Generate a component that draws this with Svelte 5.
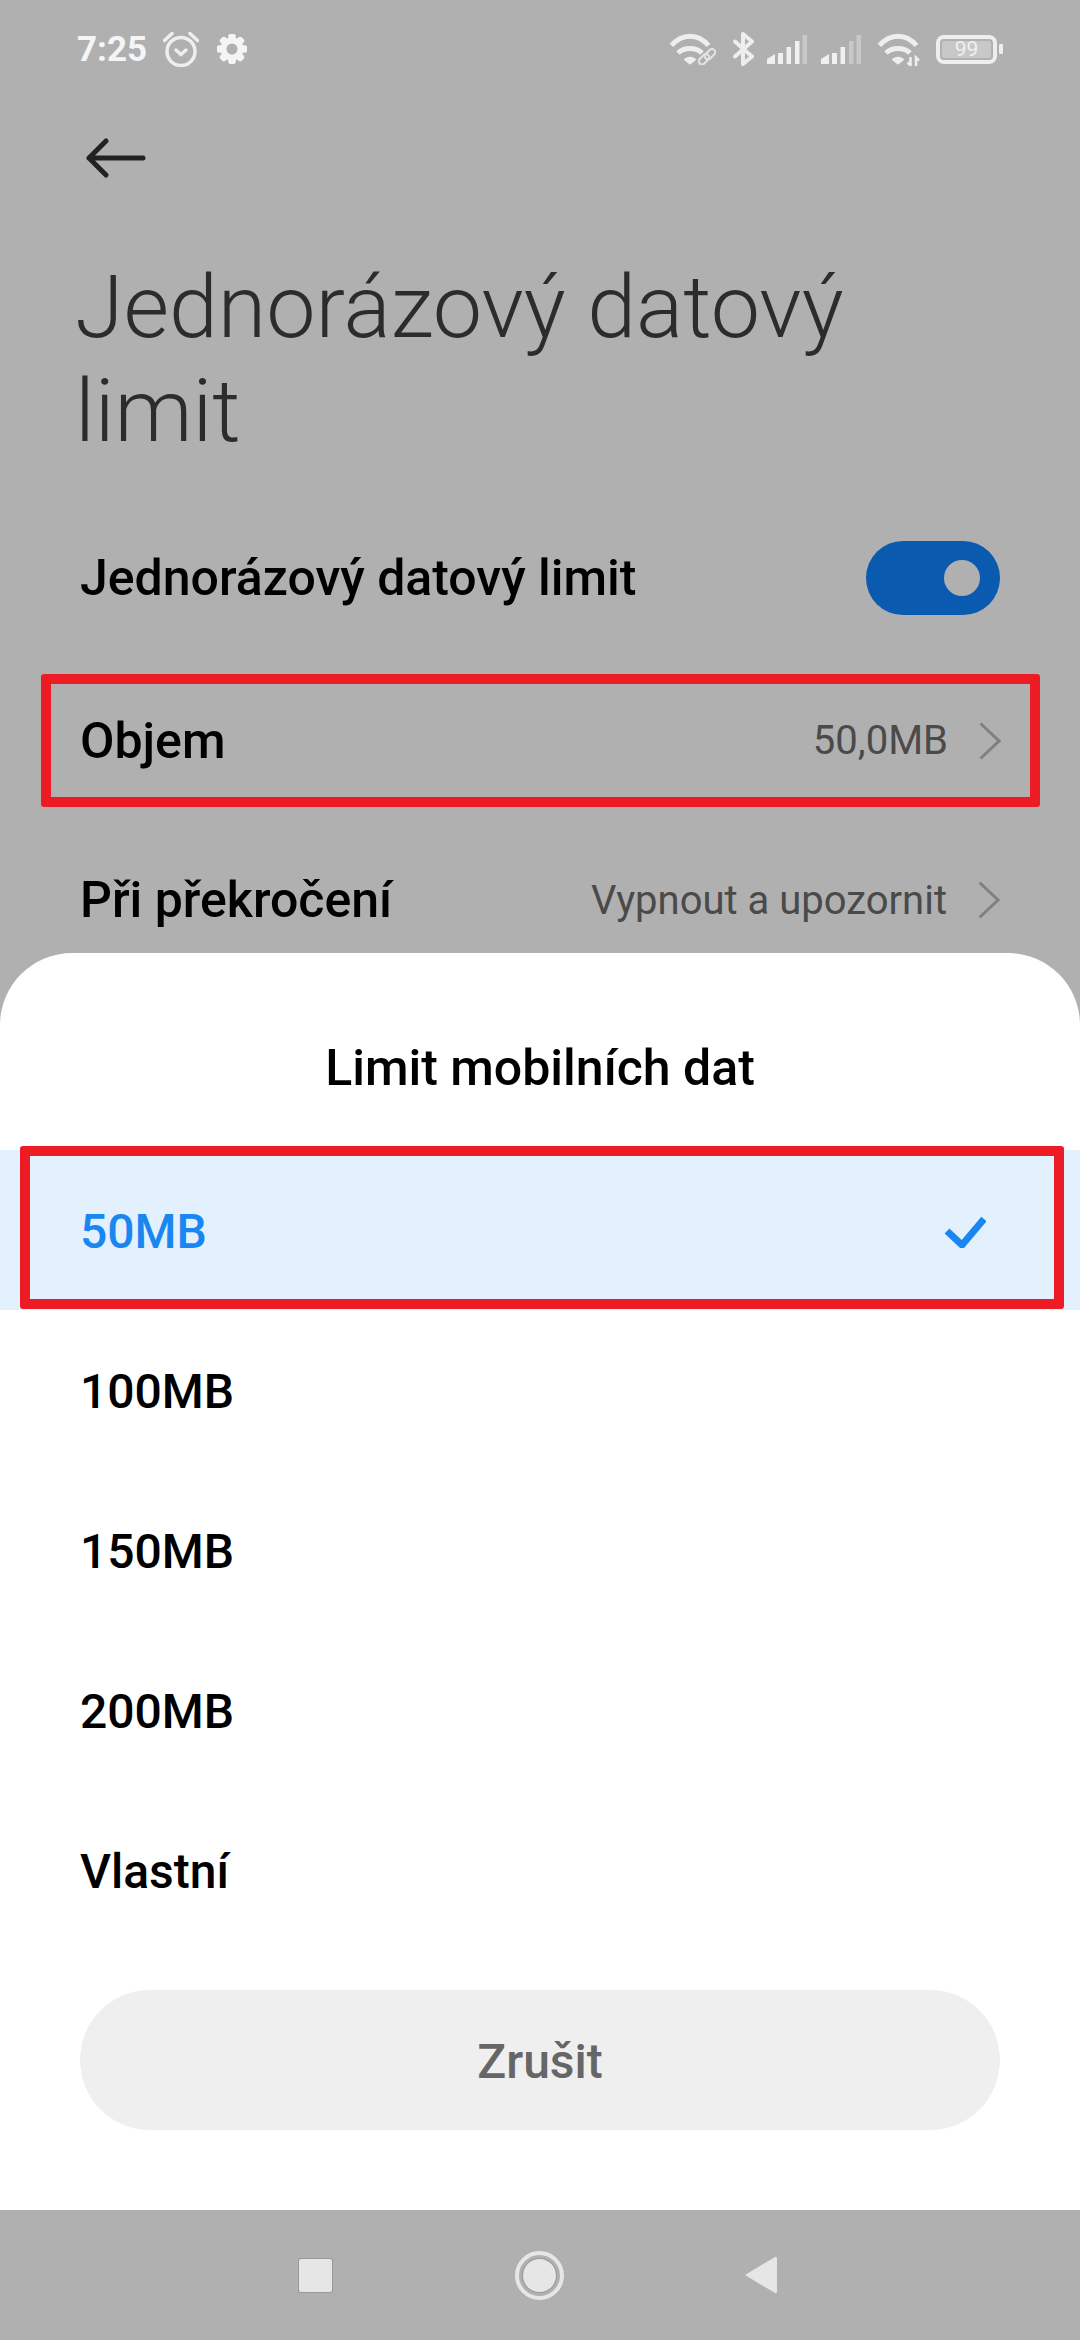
<script>
  const options = [
    { label: '50MB', selected: true },
    { label: '100MB' },
    { label: '150MB' },
    { label: '200MB' },
    { label: 'Vlastní' }
  ];
  const teeth = [0, 45, 90, 135, 180, 225, 270, 315];
</script>

{#snippet wifi()}
  <path d="M2.500 12.500C13 0 29 0 39.500 12.500" />
  <path d="M9 20C15 14 27 14 33 20" />
  <path class="solid fan" d="M16 26.500Q21 23 26 26.500L21 30.500Z" />
{/snippet}

{#snippet signal(lit)}
  <path class="solid" d="M0 29V24L8 19V29Z" />
  <rect class={lit > 1 ? 'solid' : 'faint'} x="11" y="18" width="5" height="11" />
  <rect class={lit > 2 ? 'solid' : 'faint'} x="19.500" y="12" width="4.500" height="17" />
  <rect class={lit > 3 ? 'solid' : 'faint'} x="28" y="6" width="4.500" height="23" />
  <rect class={lit > 4 ? 'solid' : 'faint'} x="35.500" y="0" width="4.500" height="29" />
{/snippet}

{#snippet chevron()}
  <svg class="chevron" width="22" height="38" viewBox="0 0 22 38" fill="none"><path d="M1.500 1.500L20 19L1.500 36.500" /></svg>
{/snippet}

<div class="screen">
  <div class="behind">
    <header class="status">
      <span class="time">7:25</span>
      <svg class="alarm" width="36" height="35" viewBox="0 0 36 35" fill="none">
        <circle cx="18" cy="19.500" r="14" />
        <path d="M1.500 8.500L9 1.500M34.500 8.500L27 1.500M13 18L18 22.500L23 18" />
      </svg>
      <svg class="gear" width="30" height="30" viewBox="0 0 30 30">
        {#each teeth as deg}
          <rect x="11.500" y="0" width="7" height="30" rx="2" transform="rotate({deg} 15 15)" />
        {/each}
        <circle cx="15" cy="15" r="11.500" />
        <circle class="hole" cx="15" cy="15" r="5.500" />
      </svg>
      <div class="status-right">
        <svg class="wifi" width="48" height="32" viewBox="0 0 48 32" fill="none">
          {@render wifi()}
          <g class="link">
            <rect x="29" y="23" width="12" height="6.500" rx="3.200" transform="rotate(-45 35 26.250)" />
            <rect x="35" y="18" width="12" height="6.500" rx="3.200" transform="rotate(-45 41 21.250)" />
          </g>
        </svg>
        <svg class="bt" width="21" height="34" viewBox="0 0 21 34" fill="none">
          <path d="M2 9.500L19 24.500L10 32V2L19 9.500L2 24.500" />
        </svg>
        <svg class="bars" width="40" height="29" viewBox="0 0 40 29">{@render signal(4)}</svg>
        <svg class="bars second" width="40" height="29" viewBox="0 0 40 29">{@render signal(3)}</svg>
        <svg class="wifi second-wifi" width="43" height="33" viewBox="0 0 43 33" fill="none">
          {@render wifi()}
          <path class="arrow" d="M33.500 24V32.500L30.500 29.500M33.500 32.500V24" />
          <path class="arrow" d="M39 33V24.500L42 27.500" />
        </svg>
        <div class="battery">
          <div class="cell"><span>99</span></div>
          <div class="nub"></div>
        </div>
      </div>
    </header>

    <svg class="back" width="60" height="40" viewBox="0 0 60 40" fill="none">
      <path d="M3 20H57M20 3L3 20L20 37" />
    </svg>

    <h1>Jednorázový datový<br />limit</h1>

    <div class="row first">
      <span class="name">Jednorázový datový limit</span>
      <div class="toggle"><div class="knob"></div></div>
    </div>

    <div class="row boxed">
      <span class="name">Objem</span>
      <span class="value">50,0MB</span>
      {@render chevron()}
    </div>

    <div class="row last">
      <span class="name">Při překročení</span>
      <span class="value">Vypnout a upozornit</span>
      {@render chevron()}
    </div>
  </div>

  <section class="sheet">
    <h2>Limit mobilních dat</h2>
    <ul>
      {#each options as opt}
        <li class:selected={opt.selected}>
          <span>{opt.label}</span>
          {#if opt.selected}
            <svg width="42" height="32" viewBox="0 0 42 32" fill="none"><path d="M3 15L18 29L40 3" /></svg>
          {/if}
        </li>
      {/each}
    </ul>
    <button>Zrušit</button>
  </section>

  <nav>
    <div class="square"></div>
    <div class="ring"><div class="dot"></div></div>
    <svg width="34" height="38" viewBox="0 0 34 38"><path d="M1 19L31 1Q33 0 33 3V35Q33 38 31 37Z" /></svg>
  </nav>
</div>

<style>
  :global(body) {
    margin: 0;
    background: #b0b0b0;
  }

  .screen {
    width: 1080px;
    height: 2340px;
    display: flex;
    flex-direction: column;
    background: #b0b0b0;
    font-family: Roboto, "Liberation Sans", sans-serif;
    overflow: hidden;
  }

  .behind {
    height: 953px;
    flex: none;
    overflow: hidden;
  }

  .status {
    height: 34px;
    padding: 32px 77px 0 77px;
    display: flex;
    align-items: center;
    color: #f5f5f5;
  }

  .time {
    font-size: 35px;
    font-weight: 700;
    width: 86px;
  }

  .alarm {
    stroke: #eee;
    stroke-width: 3.500;
    stroke-linecap: round;
    stroke-linejoin: round;
  }

  .gear {
    margin-left: 18px;
    fill: #f5f5f5;
  }

  .gear .hole {
    fill: #b0b0b0;
  }

  .status-right {
    margin-left: auto;
    display: flex;
    align-items: center;
  }

  .wifi {
    stroke: #eee;
    stroke-width: 5;
  }

  .wifi :global(.solid) {
    fill: #eee;
    stroke-width: 2;
    stroke-linejoin: round;
  }

  .link {
    stroke: #e4e4e4;
    stroke-width: 2;
  }

  .arrow {
    stroke-width: 2.500;
  }

  .bt {
    margin-left: 16px;
    stroke: #eee;
    stroke-width: 4;
    stroke-linejoin: round;
    stroke-linecap: round;
  }

  .bars {
    margin-left: 13px;
  }

  .bars.second {
    margin-left: 14px;
  }

  .bars :global(.solid) {
    fill: #f0f0f0;
  }

  .bars :global(.faint) {
    fill: #c8c8c8;
  }

  .second-wifi {
    margin-left: 16px;
  }

  .battery {
    margin-left: 16px;
    display: flex;
    align-items: center;
  }

  .cell {
    width: 61px;
    height: 29px;
    box-sizing: border-box;
    border: 4.500px solid #eee;
    border-radius: 8px;
    padding: 2px;
    display: flex;
  }

  .cell span {
    flex: 1;
    background: #c8c8c8;
    border-radius: 2px;
    color: #f0f0f0;
    font-size: 21px;
    line-height: 16px;
    text-align: center;
  }

  .nub {
    width: 4px;
    height: 10px;
    margin-left: 2px;
    background: #eee;
    border-radius: 1px;
  }

  .back {
    display: block;
    margin: 72px 0 0 86px;
    stroke: #222;
    stroke-width: 5;
    stroke-linecap: round;
    stroke-linejoin: round;
  }

  h1 {
    margin: 0;
    padding: 77px 0 34px 75px;
    font-size: 88px;
    font-weight: 300;
    line-height: 104px;
    color: #2c2c2c;
  }

  .row {
    display: flex;
    align-items: center;
    box-sizing: border-box;
    padding: 0 80px;
  }

  .first {
    height: 160px;
    padding-top: 2px;
  }

  .boxed {
    height: 133px;
    margin: 17px 40px 0 41px;
    padding: 0 29px;
    border: 10px solid #ed1c24;
    border-radius: 3px;
  }

  .last {
    height: 160px;
    margin-top: 13px;
  }

  .name {
    font-size: 50px;
    font-weight: 500;
    color: #000;
    margin-right: auto;
  }

  .value {
    font-size: 40px;
    color: #4a4a4a;
  }

  .chevron {
    margin-left: 31px;
    stroke: #808080;
    stroke-width: 3;
    flex: none;
  }

  .toggle {
    width: 134px;
    height: 74px;
    border-radius: 37px;
    background: #0a5ab0;
    display: flex;
    align-items: center;
    justify-content: flex-end;
    padding-right: 20px;
    box-sizing: border-box;
  }

  .knob {
    width: 36px;
    height: 36px;
    border-radius: 50%;
    background: #b0b0b0;
  }

  .sheet {
    flex: 1;
    background: #fff;
    border-radius: 72px 72px 0 0;
    display: flex;
    flex-direction: column;
  }

  h2 {
    margin: 0;
    height: 197px;
    box-sizing: border-box;
    padding-top: 86px;
    font-size: 50px;
    font-weight: 500;
    text-align: center;
    color: #000;
  }

  ul {
    list-style: none;
    margin: 0;
    padding: 0;
  }

  li {
    height: 160px;
    box-sizing: border-box;
    padding: 3px 80px 0;
    display: flex;
    align-items: center;
    justify-content: space-between;
    font-size: 48px;
    font-weight: 500;
    color: #000;
  }

  .selected {
    position: relative;
    background: #e3f0fd;
    color: #1a86f0;
    stroke: #1a86f0;
  }

  .selected::after {
    content: "";
    position: absolute;
    left: 20px;
    right: 16px;
    top: -4px;
    bottom: 1px;
    border: 10px solid #ed1c24;
    border-radius: 3px;
  }

  .selected svg {
    margin-right: 14px;
    stroke-width: 7;
  }

  button {
    margin: 40px 80px 0;
    height: 140px;
    padding: 2px 0 0;
    border: none;
    border-radius: 70px;
    background: #efefef;
    color: #666;
    font-family: inherit;
    font-size: 48px;
    font-weight: 500;
  }

  nav {
    height: 130px;
    flex: none;
    display: flex;
    align-items: center;
    padding: 0 0 0 299px;
  }

  .square {
    width: 33px;
    height: 33px;
    background: #e6e6e6;
    border-radius: 2px;
    box-shadow: 0 0 0 1px #999;
  }

  .ring {
    margin-left: 183px;
    width: 49px;
    height: 49px;
    box-sizing: border-box;
    border: 4px solid #e6e6e6;
    border-radius: 50%;
    display: flex;
    align-items: center;
    justify-content: center;
  }

  .dot {
    width: 33px;
    height: 33px;
    border-radius: 50%;
    background: #e6e6e6;
    box-shadow: 0 0 0 1px #999;
  }

  nav svg {
    margin-left: 180px;
    fill: #e6e6e6;
  }
</style>
